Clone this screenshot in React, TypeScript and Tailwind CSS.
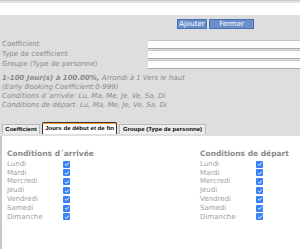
export default function App() {
  const days = ["Lundi", "Mardi", "Mercredi", "Jeudi", "Vendredi", "Samedi", "Dimanche"];

  return (
    <div className="h-[249px] w-[300px] overflow-hidden bg-white font-['DejaVu_Sans',sans-serif]">
      <div className="h-[3px] border-t border-[#c8c8c8] bg-[#e4e4e4]" />
      <div className="h-[12px] bg-white" />
      <div className="bg-[#dedede] pb-[2px]">
        <div className="flex h-[18px] items-center pl-[177px]">
          <button className="h-[10px] w-[30px] border border-[#4a6fae] bg-[#6b8fcb] text-[7px] leading-none text-white">
            Ajouter
          </button>
          <button className="ml-[2px] h-[10px] w-[45px] border border-[#4a6fae] bg-[#6b8fcb] text-[7px] leading-none text-white">
            Fermer
          </button>
        </div>
        <div className="h-[6px] pl-[2px] text-[4px] leading-none text-[#aaa]">.</div>
        <FieldRow label="Coefficient" value="" />
        <FieldRow label="Type de coefficient" value="-" />
        <FieldRow label="Groupe (Type de personne)" value="-" />
        <div className="mt-[5px] pl-[2px] text-[7px] italic leading-[9px] text-[#8a8a8a]">
          <div>
            <span className="font-bold">1-100 Jour(s) à 100.00%,</span> Arrondi à 1 Vers le haut
          </div>
          <div>(Early Booking Coefficient:0-999)</div>
          <div>Conditions d´arrivée: Lu, Ma, Me, Je, Ve, Sa, Di</div>
          <div>Conditions de départ: Lu, Ma, Me, Je, Ve, Sa, Di</div>
        </div>
        <div className="mt-[12px] flex items-end gap-[2px] whitespace-nowrap pl-[2px] font-['Liberation_Sans',sans-serif] text-[6.1px] font-bold leading-none text-black">
          <div className="flex h-[10px] w-[38px] shrink-0 items-center justify-center border border-b-0 border-[#b8b8b8] bg-[#ececec]">
            Coefficient
          </div>
          <div className="flex h-[12px] w-[75px] shrink-0 items-center justify-center rounded-t-[2px] border border-b-0 border-[#333] bg-white shadow-[inset_0_1px_0_#f0a030]">
            Jours de début et de fin
          </div>
          <div className="flex h-[10px] w-[87px] shrink-0 items-center justify-center border border-b-0 border-[#b8b8b8] bg-[#ececec]">
            Groupe (Type de personne)
          </div>
        </div>
      </div>
      <div className="flex h-[120px] border-l-2 border-[#c8c8c8] pl-[5px] pt-[14px] text-[7px] leading-[8.8px] text-[#9a9a9a]">
        <div className="w-[193px]">
          <DayColumn title="Conditions d´arrivée" days={days} />
        </div>
        <DayColumn title="Conditions de départ" days={days} />
      </div>
    </div>
  );
}

function FieldRow({ label, value }: { label: string; value: string }) {
  return (
    <div className="flex h-[10px] items-center">
      <div className="w-[148px] pl-[2px] text-[7px] leading-none text-[#8a8a8a]">{label}</div>
      <div className="flex h-[9px] flex-1 items-center border-t border-[#c4c4c4] border-b border-b-[#a8a8a8] bg-white pl-[3px] text-[5px] text-[#bbb]">
        {value}
      </div>
    </div>
  );
}

function DayColumn({ title, days }: { title: string; days: string[] }) {
  return (
    <div>
      <div className="mb-[1px] text-[7.5px] font-bold text-[#8a8a8a]">{title}</div>
      {days.map((day) => (
        <div key={day} className="flex h-[8.8px] items-center">
          <div className="w-[56px] text-[#a0a0a0]">{day}</div>
          <div className="flex h-[7px] w-[7px] items-center justify-center rounded-[1px] bg-[#3b82f6]">
            <svg viewBox="0 0 10 10" className="h-[6px] w-[6px]">
              <path d="M2 5.2l2 2 4-4.5" fill="none" stroke="white" strokeWidth="1.6" />
            </svg>
          </div>
        </div>
      ))}
    </div>
  );
}
